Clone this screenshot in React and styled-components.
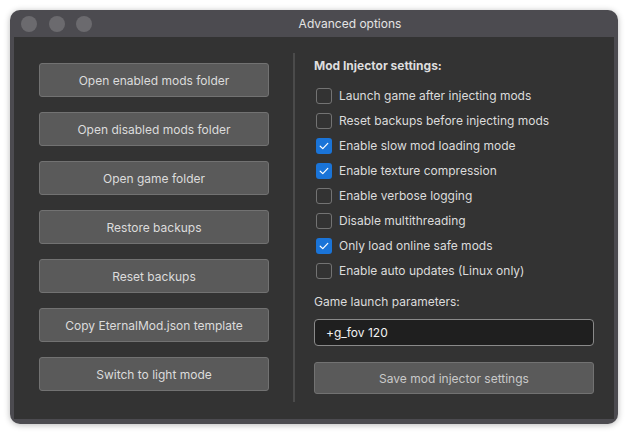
import React from 'react'
import styled, { createGlobalStyle } from 'styled-components'

const Global = createGlobalStyle`
    html, body {
        margin: 0;
        padding: 0;
        background: #ffffff;
    }
    body {
        font-family: Inter, "Noto Sans", sans-serif;
        -webkit-font-smoothing: antialiased;
    }
`

const Page = styled.div`
    width: 628px;
    height: 434px;
    padding: 10px;
    box-sizing: border-box;
`

const Window = styled.div`
    width: 608px;
    height: 414px;
    display: flex;
    flex-direction: column;
    background: #4c4b50;
    border-radius: 10px;
    padding: 0 4px 5px 4px;
    box-sizing: border-box;
    box-shadow: 0 1px 6px rgba(0, 0, 0, 0.28);
`

const TitleBar = styled.div`
    height: 27px;
    display: flex;
    align-items: center;
    padding-left: 7px;
`

const Lights = styled.div`
    display: flex;
    gap: 11.5px;
`

const Light = styled.span`
    width: 16px;
    height: 16px;
    border-radius: 50%;
    background: #6b6a6e;
`

const Title = styled.div`
    flex: 1;
    text-align: center;
    padding-right: 6px;
    font-size: 12px;
    color: #e4e4e4;
`

const Body = styled.div`
    flex: 1;
    display: flex;
    background: #333333;
    padding: 16px 20px 17px 25px;
`

const LeftColumn = styled.div`
    width: 230px;
    display: flex;
    flex-direction: column;
    gap: 15px;
    padding-top: 10px;
`

const Button = styled.button`
    height: ${props => props.tall ? '32px' : '34px'};
    width: 100%;
    box-sizing: border-box;
    background: #5a5a5a;
    border: 1px solid #727272;
    border-radius: 3px;
    color: ${props => props.dim ? '#c9c9c9' : '#dcdcdc'};
    font-family: Inter, "Noto Sans", sans-serif;
    font-size: 12px;
    padding: 0;
`

const Divider = styled.div`
    width: 2px;
    background: #4b4b4b;
    margin: 0 19px 0 24px;
`

const RightColumn = styled.div`
    flex: 1;
    display: flex;
    flex-direction: column;
`

const Heading = styled.div`
    font-size: 12px;
    font-weight: 700;
    line-height: 16px;
    color: #dedede;
    margin: 5px 0 9px;
`

const OptionList = styled.div`
    display: flex;
    flex-direction: column;
`

const Option = styled.label`
    height: 25px;
    display: flex;
    align-items: center;
    gap: 7px;
    padding-left: 2px;
    font-size: 12px;
    color: #dcdcdc;
`

const Box = styled.span`
    width: 16px;
    height: 16px;
    box-sizing: border-box;
    border-radius: 3px;
    display: flex;
    align-items: center;
    justify-content: center;
    border: ${props => props.checked ? 'none' : '1.5px solid #737373'};
    background: ${props => props.checked ? '#1a74d8' : 'transparent'};
`

const FieldLabel = styled.div`
    font-size: 12px;
    line-height: 16px;
    color: #dcdcdc;
    margin: 11px 0 9px;
`

const Input = styled.div`
    height: 27px;
    box-sizing: border-box;
    background: #1f1f1f;
    border: 1px solid #8a8a8a;
    border-radius: 4px;
    display: flex;
    align-items: center;
    padding-left: 11px;
    font-size: 12px;
    color: #f2f2f2;
    margin-bottom: 16px;
`

const Check = () => (
    <svg width="10" height="8" viewBox="0 0 10 8">
        <path d="M1.2 4.2 L3.8 6.6 L8.8 1.4" fill="none" stroke="#ffffff" strokeWidth="1.2" strokeLinecap="round" strokeLinejoin="round" />
    </svg>
)

const buttons = [
    'Open enabled mods folder',
    'Open disabled mods folder',
    'Open game folder',
    'Restore backups',
    'Reset backups',
    'Copy EternalMod.json template',
    'Switch to light mode',
]

const options = [
    ['Launch game after injecting mods', false],
    ['Reset backups before injecting mods', false],
    ['Enable slow mod loading mode', true],
    ['Enable texture compression', true],
    ['Enable verbose logging', false],
    ['Disable multithreading', false],
    ['Only load online safe mods', true],
    ['Enable auto updates (Linux only)', false],
]

const App = () => (
    <Page>
        <Global />
        <Window>
            <TitleBar>
                <Lights>
                    <Light />
                    <Light />
                    <Light />
                </Lights>
                <Title>Advanced options</Title>
            </TitleBar>
            <Body>
                <LeftColumn>
                    {buttons.map(b => <Button key={b}>{b}</Button>)}
                </LeftColumn>
                <Divider />
                <RightColumn>
                    <Heading>Mod Injector settings:</Heading>
                    <OptionList>
                        {options.map(([text, on]) => (
                            <Option key={text}>
                                <Box checked={on}>{on && <Check />}</Box>
                                {text}
                            </Option>
                        ))}
                    </OptionList>
                    <FieldLabel>Game launch parameters:</FieldLabel>
                    <Input>+g_fov 120</Input>
                    <Button tall dim>Save mod injector settings</Button>
                </RightColumn>
            </Body>
        </Window>
    </Page>
)

export default App
